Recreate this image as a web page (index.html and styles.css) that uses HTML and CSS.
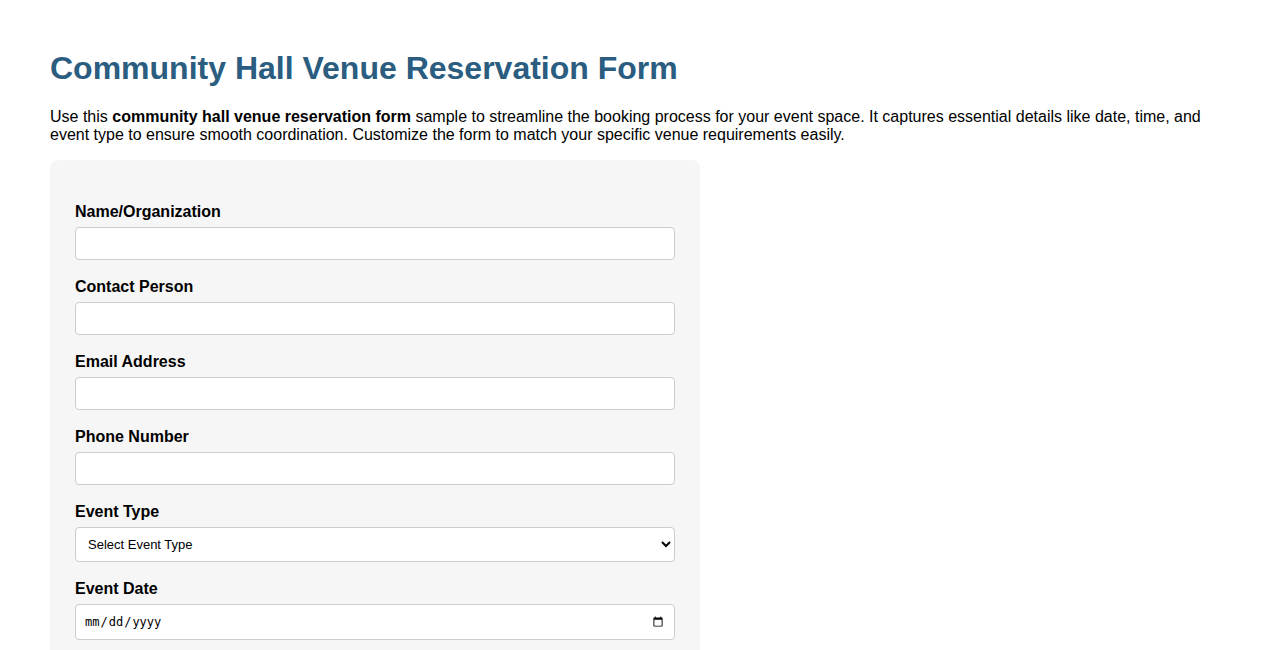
FILE: index.html
```html
<!DOCTYPE html>
<html lang="en">
<head>
<meta charset="utf-8">
<title>Community Hall Venue Reservation Form</title>
<link rel="stylesheet" href="styles.css">
</head>
<body>
<h1 class="title">Community Hall Venue Reservation Form</h1>
<p class="intro">Use this <strong>community hall venue reservation form</strong> sample to streamline the booking process for your event space. It captures essential details like date, time, and event type to ensure smooth coordination. Customize the form to match your specific venue requirements easily.</p>
<form class="form">
  <label class="label" for="name">Name/Organization</label>
  <input class="field" type="text" id="name">
  <label class="label" for="contact">Contact Person</label>
  <input class="field" type="text" id="contact">
  <label class="label" for="email">Email Address</label>
  <input class="field" type="email" id="email">
  <label class="label" for="phone">Phone Number</label>
  <input class="field" type="tel" id="phone">
  <label class="label" for="type">Event Type</label>
  <select class="field select" id="type">
    <option>Select Event Type</option>
    <option>Wedding</option>
    <option>Birthday Party</option>
    <option>Meeting</option>
  </select>
  <label class="label" for="date">Event Date</label>
  <input class="field date" type="date" id="date">
</form>
</body>
</html>
```
FILE: styles.css
```css
body {
  margin: 0;
  padding: 27px 50px 40px;
  font-family: "Liberation Sans", Arial, sans-serif;
  color: #000;
  background: #fff;
}
.title {
  font-size: 32px;
  font-weight: bold;
  color: #2a5d80;
  margin: 23px 0 21px;
}
.intro {
  font-size: 16px;
  line-height: 18px;
  margin: 0 0 16px;
}
.form {
  width: 600px;
  background: #f6f6f6;
  border-radius: 8px;
  padding: 25px 25px 25px;
  display: flex;
  flex-direction: column;
}
.label {
  display: block;
  font-weight: bold;
  font-size: 16px;
  line-height: 18px;
  margin: 18px 0 6px;
}
.field {
  box-sizing: border-box;
  width: 600px;
  height: 33px;
  padding: 8px;
  border: 1px solid #ccc;
  border-radius: 4px;
  background: #fff;
  font-family: "Liberation Sans", Arial, sans-serif;
  font-size: 13px;
  margin: 0;
}
.select {
  height: 35px;
  padding: 8px 8px 8px 8px;
  color: #000;
}
.date {
  height: 36px;
  font-family: "DejaVu Sans Mono", monospace;
  font-size: 12px;
  color: #000;
}
```
